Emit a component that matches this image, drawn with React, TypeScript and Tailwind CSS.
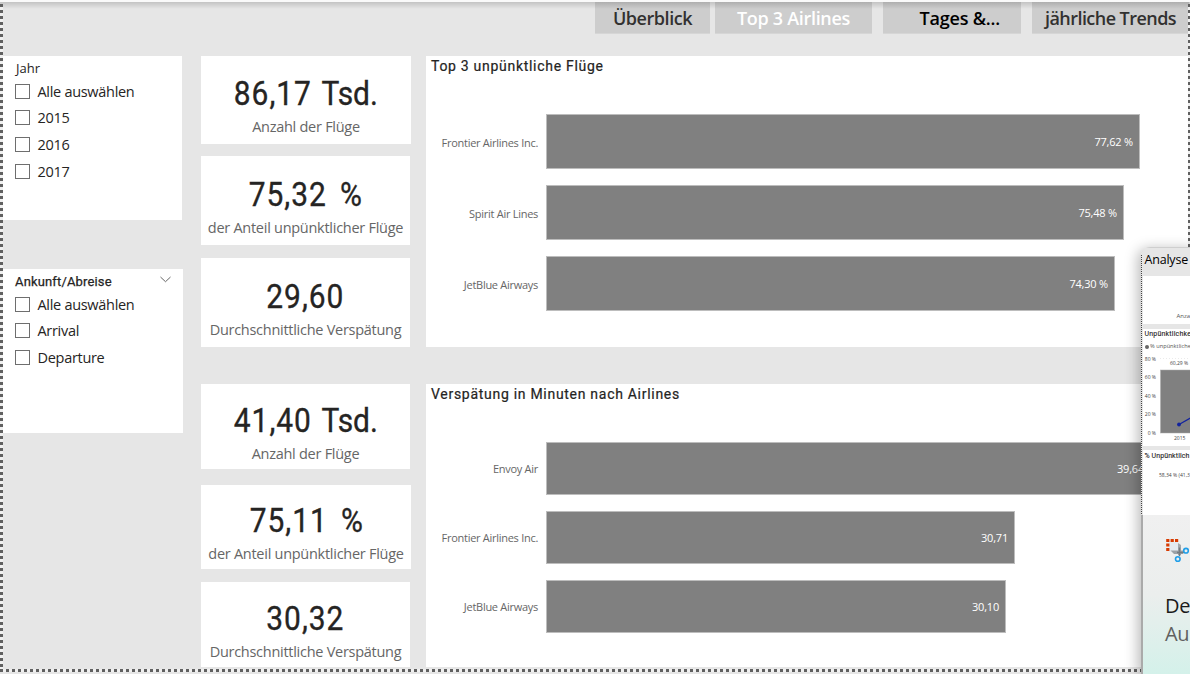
import React from "react";

const ui = "font-['Open_Sans','Noto_Sans',sans-serif]";
const din = "font-['Roboto','Noto_Sans',sans-serif]";

function Tab({ label, className }: { label: string; className: string }) {
  return (
    <div className={`flex h-8 items-center border-b border-[#d6d6d6] bg-[#cdcdcd] text-[18px] leading-none font-semibold whitespace-nowrap ${className}`}>
      <span className="pt-px">{label}</span>
    </div>
  );
}

function Slicer({ title, titleClass, items, className, chevron }: { title: string; titleClass: string; items: string[]; className: string; chevron?: boolean }) {
  return (
    <section className={`h-[164px] bg-white pl-3 ${className}`}>
      <header className="flex h-[22px] items-center justify-between pt-[3px] pr-3">
        <h2 className={`text-[13px] leading-none text-[#252423] ${titleClass}`}>{title}</h2>
        {chevron && (
          <svg width="11" height="7" viewBox="0 0 11 7" className="mb-[5px]" fill="none" stroke="#666" strokeWidth="1">
            <path d="M0.5 1L5.5 5.7L10.5 1" />
          </svg>
        )}
      </header>
      <ul className="pt-[0.8px]">
        {items.map((item) => (
          <li key={item} className="flex h-[26.7px] items-center gap-[7.5px]">
            <span className="mb-[2px] size-[15px] border border-[#6e6e6e] bg-white" />
            <span className="pb-[0.3px] text-[14.5px] leading-none tracking-[-0.3px] text-[#252423]">{item}</span>
          </li>
        ))}
      </ul>
    </section>
  );
}

function Kpi({ value, unit, unitClass, label, className }: { value: string; unit?: string; unitClass?: string; label: string; className: string }) {
  return (
    <section className={`flex flex-col items-center bg-white whitespace-nowrap ${className}`}>
      <div className={`${din} flex scale-x-[0.88] text-[34px] leading-[40px] text-[#252423] [-webkit-text-stroke:0.35px_#252423]`}>
        <span className="tracking-[1.1px]">{value}</span>
        {unit && <span className={unitClass}>{unit}</span>}
      </div>
      <div className="mt-[4px] text-[14.5px] leading-[20px] tracking-[-0.27px] text-[#666]">{label}</div>
    </section>
  );
}

type Bar = { name: string; value: string; width: string };

function BarChart({ title, bars, className, rows, barHeight, nameClass }: { title: string; bars: Bar[]; className: string; rows: string; barHeight: string; nameClass: string }) {
  return (
    <section className={`bg-white ${className}`}>
      <h2 className={`${din} pt-[2px] pl-[5px] text-[14px] leading-4 tracking-[0.71px] text-[#252423] [-webkit-text-stroke:0.2px_#252423]`}>{title}</h2>
      <div className={`flex flex-col ${rows}`}>
        {bars.map((bar) => (
          <div key={bar.name} className={`flex items-center ${barHeight}`}>
            <span className={`w-[112px] text-right text-[11px] leading-none tracking-[-0.28px] whitespace-nowrap text-[#666] ${nameClass}`}>{bar.name}</span>
            <div className={`ml-2 flex h-full items-center justify-end border border-[#bdbdbd] bg-[#808080] pr-[6px] text-[11px] leading-none tracking-[-0.2px] text-white ${bar.width}`}>
              {bar.value}
            </div>
          </div>
        ))}
      </div>
    </section>
  );
}

function SnipIcon() {
  return (
    <svg width="25" height="25" viewBox="0 0 25 25" className="shrink-0">
      <path d="M4 4H13V14H4Z" fill="#e4eaf0" />
      <path d="M13 5L16 7V17H13Z" fill="#a3a8ad" />
      <path d="M5.5 12.500L9 16H18V12.500Z" fill="#9ba1a6" />
      <path d="M14.5 9.500V18M12 14.500H19" stroke="#757b80" strokeWidth="1.5" fill="none" />
      <g fill="#d83b01">
        <rect x="1.200" y="1" width="3.200" height="3" />
        <rect x="5.600" y="1" width="3.200" height="3" />
        <rect x="10" y="1" width="3.200" height="3" />
        <rect x="1.200" y="5.500" width="3.200" height="3" />
        <rect x="1.200" y="10" width="3.200" height="3" />
      </g>
      <g fill="none" stroke="#1f9ee8" strokeWidth="1.600">
        <circle cx="21" cy="12.700" r="2.300" />
        <circle cx="12.800" cy="21" r="2.300" />
      </g>
    </svg>
  );
}

function SnipToast() {
  return (
    <aside className="absolute top-[247px] left-[1141px] h-[427px] w-[56px] overflow-hidden rounded-tl-[9px] bg-[#e6e6e6] shadow-[-3px_2px_14px_rgba(0,0,0,0.28)]">
      <div className="flex h-[268px] flex-col border-t border-[#cfcfcf] pl-[2px] whitespace-nowrap">
        <div className="h-[28px] pt-[3px] pl-[1.5px] text-[12.5px] leading-[17px] tracking-[-0.2px] text-black">Analyse</div>
        <div className="h-[48px] bg-white pt-[36px] pl-[33.5px] text-[6px] leading-[9px] text-[#555]">Anza</div>
        <div className="mt-[5px] h-[117px] bg-white">
          <div className={`${din} pl-[1.5px] text-[7px] leading-[10px] tracking-[0.2px] text-[#252423] [-webkit-text-stroke:0.1px_#252423]`}>Unpünktlichke</div>
          <div className="flex items-center gap-px pl-[2px] text-[5.7px] leading-[15px] text-[#555]">
            <span className="size-[4px] rounded-full bg-[#666]" />% unpünktliche
          </div>
          <svg width="60" height="88" viewBox="0 0 60 88" className="font-['Open_Sans',sans-serif] text-[5px]" fill="#444">
            <path d="M17 4.500H60" stroke="#ddd" strokeWidth="0.6" strokeDasharray="1 2" />
            <rect x="17.500" y="16" width="50" height="63" fill="#808080" stroke="#aaa" strokeWidth="0.5" />
            <text x="13" y="6.500" textAnchor="end">80 %</text>
            <text x="13" y="25" textAnchor="end">60 %</text>
            <text x="13" y="43.500" textAnchor="end">40 %</text>
            <text x="13" y="62" textAnchor="end">20 %</text>
            <text x="13" y="80.500" textAnchor="end">0 %</text>
            <text x="27" y="11">60,29 %</text>
            <text x="31" y="85.500">2015</text>
            <path d="M36 70.500L50 62.500" stroke="#12239e" strokeWidth="1.300" fill="none" />
            <circle cx="36" cy="70.500" r="1.900" fill="#12239e" />
          </svg>
        </div>
        <div className="mt-[4px] h-[65px] bg-white">
          <div className={`${din} pl-[1.5px] text-[7px] leading-[13px] tracking-[0.1px] text-[#252423] [-webkit-text-stroke:0.1px_#252423]`}>% Unpünktlich</div>
          <div className="pt-[9px] pl-4 text-[5px] leading-[7px] text-[#444]">58,34 % (41,3</div>
        </div>
      </div>
      <div className="h-[159px] border-l-2 border-[#aaa] bg-linear-to-b from-[#f0f0f0] via-[#ebeeed] to-[#d4f1ea] pt-[23px] pl-[22px] whitespace-nowrap">
        <SnipIcon />
        <div className="mt-[29px] text-[20px] leading-7 tracking-[-0.3px] text-[#1a1a1a]">De</div>
        <div className="text-[20px] leading-7 tracking-[-0.3px] text-[#606060]">Au</div>
      </div>
      <div className="absolute top-2 left-0 h-[260px] w-px bg-[repeating-linear-gradient(180deg,#444_0_1px,#e6e6e6_1px_2px)]" />
    </aside>
  );
}

export default function App() {
  return (
    <main className={`relative h-[674px] w-[1190px] overflow-hidden bg-[#e6e6e6] ${ui}`}>
      <div className="h-[2px] bg-[#fafafa]" />
      <nav className="flex h-[54px] pl-[595px]">
        <Tab label="Überblick" className="w-[115px] justify-center tracking-[-0.45px] text-[#323130]" />
        <Tab label="Top 3 Airlines" className="ml-[5px] w-[157px] justify-center tracking-[-0.3px] text-white" />
        <Tab label="Tages &amp;..." className="ml-[11px] w-[138px] justify-end pr-[21px] tracking-[-0.2px] text-black" />
        <Tab label="jährliche Trends" className="ml-[11px] w-[157px] justify-center tracking-[-0.55px] text-[#323130]" />
      </nav>
      <div className="flex pl-[3px]">
        <div className="w-[198px]">
          <Slicer title="Jahr" titleClass="pl-px" items={["Alle auswählen", "2015", "2016", "2017"]} className="w-[179px]" />
          <Slicer title="Ankunft/Abreise" titleClass="font-['Roboto',sans-serif] tracking-[0.15px] [-webkit-text-stroke:0.25px_#252423]" items={["Alle auswählen", "Arrival", "Departure"]} className="mt-[49px] w-[180px]" chevron />
        </div>
        <div className="w-[225px]">
          <Kpi value="86,17" unit="Tsd." unitClass="pl-[11px] tracking-[0px]" label="Anzahl der Flüge" className="h-[88px] w-[210px] pt-[17px]" />
          <Kpi value="75,32" unit="%" unitClass="pl-[15px]" label="der Anteil unpünktlicher Flüge" className="mt-[12px] h-[89px] w-[209px] pt-[18px]" />
          <Kpi value="29,60" label="Durchschnittliche Verspätung" className="mt-[13px] h-[89px] w-[209px] pt-[18px]" />
          <Kpi value="41,40" unit="Tsd." unitClass="pl-[11px] tracking-[0px]" label="Anzahl der Flüge" className="mt-[37px] h-[85px] w-[209px] pt-[16px]" />
          <Kpi value="75,11" unit="%" unitClass="pl-[15px]" label="der Anteil unpünktlicher Flüge" className="mt-[16px] h-[84px] w-[210px] pt-[15px]" />
          <Kpi value="30,32" label="Durchschnittliche Verspätung" className="mt-[13px] h-[85px] w-[209px] pt-[16px]" />
        </div>
        <div className="w-[764px]">
          <BarChart
            title="Top 3 unpünktliche Flüge"
            className="h-[291px]"
            rows="gap-4 pt-[40px]"
            barHeight="h-[55px]"
            nameClass="pt-[2px]"
            bars={[
              { name: "Frontier Airlines Inc.", value: "77,62 %", width: "w-[594px]" },
              { name: "Spirit Air Lines", value: "75,48 %", width: "w-[578px]" },
              { name: "JetBlue Airways", value: "74,30 %", width: "w-[569px]" },
            ]}
          />
          <BarChart
            title="Verspätung in Minuten nach Airlines"
            className="mt-[37px] h-[283px]"
            rows="gap-4 pt-[40px]"
            barHeight="h-[53px]"
            nameClass=""
            bars={[
              { name: "Envoy Air", value: "39,64", width: "w-[605px]" },
              { name: "Frontier Airlines Inc.", value: "30,71", width: "w-[469px]" },
              { name: "JetBlue Airways", value: "30,10", width: "w-[460px]" },
            ]}
          />
        </div>
      </div>
      <div className="absolute top-[2px] left-0 h-[7px] w-full bg-linear-to-b from-black/15 to-transparent" />
      <div className="absolute top-[4px] left-0 h-[668px] w-[3px] bg-[repeating-linear-gradient(180deg,#606060_0_3px,#f0f0f0_3px_6px)]" />
      <div className="absolute top-[4px] left-[1188px] h-[243px] w-[2px] bg-[repeating-linear-gradient(180deg,#606060_0_3px,#f0f0f0_3px_6px)]" />
      <div className="absolute top-[669px] left-0 h-[3px] w-full bg-[repeating-linear-gradient(90deg,#606060_0_3px,#f0f0f0_3px_6px)]" />
      <SnipToast />
    </main>
  );
}
